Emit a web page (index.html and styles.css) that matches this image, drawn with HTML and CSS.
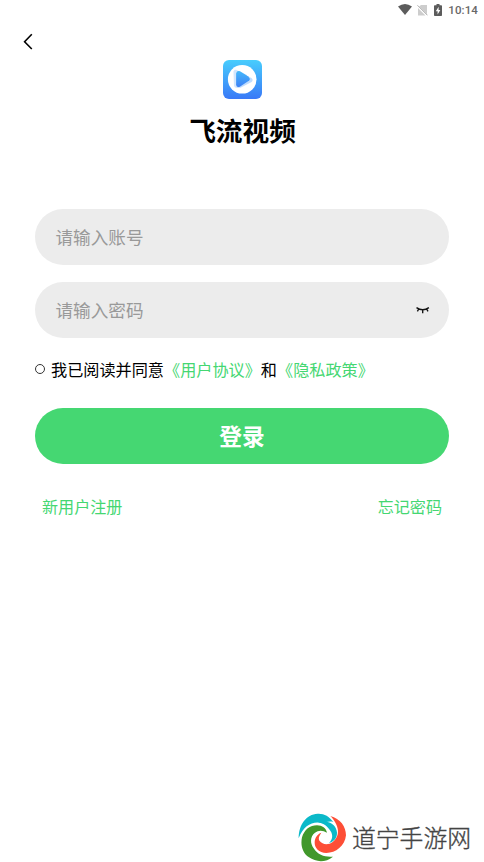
FILE: index.html
```html
<!DOCTYPE html>
<html lang="zh-CN">
<head>
<meta charset="utf-8">
<title>飞流视频</title>
<link rel="stylesheet" href="styles.css">
</head>
<body>
<header class="status">
  <svg class="wifi" width="14" height="11" viewBox="0 0 14 11"><path d="M0 2.6Q7-2.4 14 2.6L7 11Z" fill="#5c5c5c"/></svg>
  <svg class="sim" width="11" height="12" viewBox="0 0 11 12"><path d="M4 1H10V10.3L2.2 2.5ZM1 4L8.5 11.5H1Z" fill="#cdcdcd"/><path d="M.5 1.3L10.5 11.3" stroke="#aaa" stroke-width="1"/></svg>
  <svg class="battery" width="8" height="12" viewBox="0 0 8 12"><path d="M2.5 0H5.5V1.2H7.2Q8 1.2 8 2V11.2Q8 12 7.2 12H.8Q0 12 0 11.2V2Q0 1.2.8 1.2H2.5Z" fill="#5c5c5c"/><path d="M4.6 2.8L1.8 7.2H3.6V10.4L6.3 6H4.6Z" fill="#fff"/></svg>
  <span class="time">10:14</span>
</header>
<nav class="nav">
  <svg width="10" height="17" viewBox="0 0 10 17"><path d="M8.8 1.3L1.6 8.7L8.8 16" fill="none" stroke="#000" stroke-width="1.6"/></svg>
</nav>
<main class="login">
  <svg class="logo" width="39" height="39" viewBox="0 0 39 39">
    <defs>
      <linearGradient id="bg" x1="0" y1="0" x2="0" y2="1"><stop offset="0" stop-color="#48cdfd"/><stop offset="1" stop-color="#3979f7"/></linearGradient>
      <linearGradient id="play" x1="0" y1="0" x2="0" y2="1"><stop offset="0" stop-color="#45b8fa"/><stop offset="1" stop-color="#3c80f6"/></linearGradient>
    </defs>
    <rect width="39" height="39" rx="6" fill="url(#bg)"/>
    <circle cx="19.2" cy="19.3" r="14.3" fill="#fff"/>
    <path d="M10.5 11.5Q10.8 9.3 13 9.7L24 15L15.5 27.8Q11.8 28.4 11 26Z" fill="#4a9bf8" opacity=".25"/>
    <path d="M17 12.5L28.4 18Q30.8 19.8 28.6 22L18 27.5Q15 28.5 13.5 26Z" fill="#4a9bf8" opacity=".35"/>
    <path d="M13.1 13.6Q13.8 10.4 17 11.3L25.3 16.5Q27.6 18.6 26.2 20.6L16.8 26.8Q13.5 27.8 13.1 24.8Z" fill="url(#play)"/>
  </svg>
  <h1 class="title">飞流视频</h1>
  <div class="field account"><span>请输入账号</span></div>
  <div class="field"><span>请输入密码</span>
    <svg width="14" height="8" viewBox="0 0 14 8"><path d="M.5 1.6Q6.7 6 12.9 1.6M2.6 3.2L1.4 5.4M10.8 3.2L12 5.4M6.7 3.9V7.2" fill="none" stroke="#111" stroke-width="1.35"/></svg>
  </div>
  <div class="agree"><i class="check"></i><span>我已阅读并同意</span><a>《用户协议》</a><span>和</span><a>《隐私政策》</a></div>
  <div class="submit">登录</div>
  <div class="links"><a>新用户注册</a><a>忘记密码</a></div>
</main>
<footer class="brand">
  <svg width="50" height="50" viewBox="0 0 150 150">
    <path d="M5 79C5 38 27 7 62 5C81 4 96 12 109 30C98 27 86 30 76 34C48 26 20 40 5 79Z" fill="#0bb9c9"/>
    <path d="M100 12C130 20 147 43 147 70C144 102 116 123 88 123C66 123 52 108 53 91C53 78 61 66 73 62C66 72 63 80 68 87C76 98 94 100 107 90C133 70 125 37 100 12Z" fill="#fd4e36"/>
    <path d="M108 134C85 153 56 150 36 136C16 122 10 99 15 76C22 53 39 40 60 40C76 40 87 49 90 62C77 54 64 54 54 62C40 72 38 94 50 109C64 130 84 136 108 134Z" fill="#41982b"/>
    <path d="M64 31C86 24 108 31 116 48C126 67 117 88 96 93C106 83 109 71 101 58C92 43 80 35 64 31Z" fill="#0bb9c9"/>
  </svg>
  <span>道宁手游网</span>
</footer>
</body>
</html>
```
FILE: styles.css
```css
* { box-sizing: border-box; }
body {
  margin: 0;
  width: 484px;
  height: 862px;
  display: flex;
  flex-direction: column;
  overflow: hidden;
  background: #fff;
  color: #000;
  font-family: "Noto Sans CJK SC", sans-serif;
}
svg { display: block; flex: none; }
.status {
  height: 19px;
  padding-right: 6px;
  display: flex;
  align-items: center;
  justify-content: flex-end;
}
.sim { margin-left: 5px; }
.battery { margin-left: 6px; }
.time {
  margin-left: 6px;
  padding-top: 2px;
  font: 500 11.5px/19px Roboto, sans-serif;
  letter-spacing: .1px;
  color: #686868;
}
.nav { height: 41px; padding: 14px 0 0 23px; }
.login {
  flex: 1;
  padding: 0 35px;
  display: flex;
  flex-direction: column;
}
.logo { align-self: center; }
.title {
  margin: 11px 0 0 1px;
  text-align: center;
  font-size: 26.7px;
  line-height: 40px;
  font-weight: 700;
}
.account { margin: 59px 0 17px; }
.field {
  height: 56px;
  padding: 0 19px 0 20.5px;
  display: flex;
  align-items: center;
  justify-content: space-between;
  border-radius: 28px;
  background: #ececec;
  color: #999;
  font-size: 17.6px;
}
.field span { padding-bottom: 2px; }
.agree {
  margin-top: 19px;
  height: 25px;
  padding-bottom: 1px;
  display: flex;
  align-items: center;
  font-size: 16.15px;
  line-height: 24px;
  white-space: nowrap;
}
.check {
  width: 10px;
  height: 10px;
  margin-right: 6px;
  border: 1px solid #333;
  border-radius: 50%;
}
a { color: #45d772; }
.submit {
  margin-top: 26px;
  height: 56px;
  border-radius: 28px;
  background: #45d772;
  color: #fff;
  font-size: 22.7px;
  font-weight: 700;
  line-height: 56px;
  text-align: center;
}
.links {
  margin-top: 30px;
  padding: 0 7px;
  display: flex;
  justify-content: space-between;
  font-size: 16.1px;
  line-height: 24px;
}
.brand {
  height: 50px;
  padding-left: 297px;
  display: flex;
  align-items: center;
  color: #444;
  font-size: 23.8px;
  font-weight: 300;
}
.brand span {
  margin-left: 5px;
  padding-bottom: 2px;
  white-space: nowrap;
  -webkit-text-stroke: .35px #444;
}
```
